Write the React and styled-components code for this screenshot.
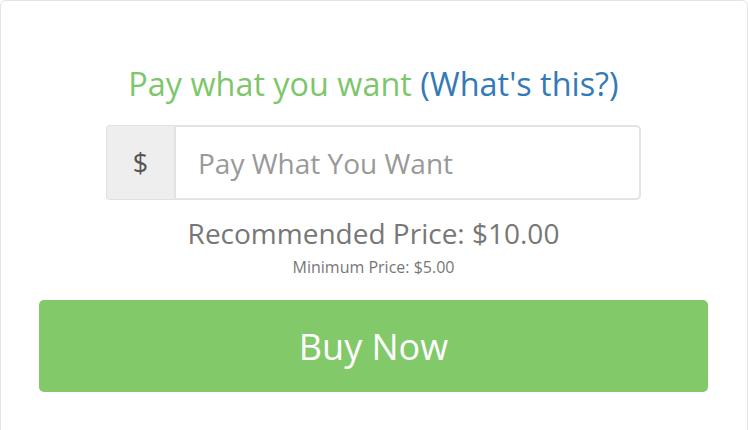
import React from "react";
import styled, { createGlobalStyle } from "styled-components";

const Global = createGlobalStyle`
  html, body { margin: 0; padding: 0; background: #fff; }
  body { font-family: "Open Sans", "Noto Sans", sans-serif; }
`;

const Card = styled.div`
  box-sizing: border-box;
  width: 748px;
  height: 440px;
  border: 1px solid #e3e3e3;
  border-radius: 6px;
  background: #fff;
  padding: 58px 39px 0 38px;
  display: flex;
  flex-direction: column;
  align-items: center;
`;

const Title = styled.h2`
  margin: 0;
  font-size: 32.4px;
  font-weight: 400;
  line-height: 48px;
  color: #7ec66a;
`;

const Link = styled.a`
  color: #337ab7;
  text-decoration: none;
`;

const InputGroup = styled.div`
  display: flex;
  width: 535px;
  height: 75px;
  margin-top: 18px;
  box-sizing: border-box;
`;

const Addon = styled.span`
  width: 68px;
  display: flex;
  align-items: center;
  justify-content: center;
  background: #eeeeee;
  border: 1px solid #e0e0e0;
  border-right: 0;
  border-radius: 4px 0 0 4px;
  color: #555;
  font-size: 27px;
  box-sizing: border-box;
`;

const Input = styled.input`
  flex: 1;
  min-width: 0;
  box-sizing: border-box;
  border: 2px solid #e3e3e3;
  border-radius: 0 5px 5px 0;
  padding: 0 0 0 22px;
  font-family: "Open Sans", sans-serif;
  font-size: 28px;
  color: #555;
  outline: none;
  &::placeholder { color: #999; }
`;

const Recommended = styled.div`
  margin-top: 15px;
  font-size: 28px;
  line-height: 36px;
  color: #777;
`;

const Minimum = styled.div`
  margin-top: 5px;
  font-size: 16px;
  line-height: 22px;
  color: #777;
`;

const BuyButton = styled.button`
  margin-top: 22px;
  width: 100%;
  height: 92px;
  border: 0;
  border-radius: 5px;
  background: #82c96a;
  color: #fff;
  font-family: "Open Sans", sans-serif;
  font-size: 36px;
  cursor: pointer;
`;

export default function App() {
  return (
    <>
      <Global />
      <Card>
        <Title>
          Pay what you want <Link href="#">(What's this?)</Link>
        </Title>
        <InputGroup>
          <Addon>$</Addon>
          <Input placeholder="Pay What You Want" />
        </InputGroup>
        <Recommended>Recommended Price: $10.00</Recommended>
        <Minimum>Minimum Price: $5.00</Minimum>
        <BuyButton>Buy Now</BuyButton>
      </Card>
    </>
  );
}
